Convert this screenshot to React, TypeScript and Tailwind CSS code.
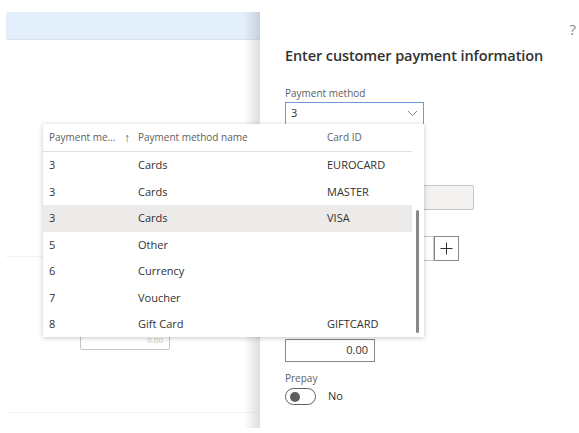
import React from "react";

const rows = [
  { id: "3", name: "Cards", card: "EUROCARD" },
  { id: "3", name: "Cards", card: "MASTER" },
  { id: "3", name: "Cards", card: "VISA", active: true },
  { id: "5", name: "Other", card: "" },
  { id: "6", name: "Currency", card: "" },
  { id: "7", name: "Voucher", card: "" },
  { id: "8", name: "Gift Card", card: "GIFTCARD" },
];

function Chevron() {
  return (
    <svg width="11" height="7" viewBox="0 0 11 7" fill="none">
      <path d="M1 1l4.5 4.5L10 1" stroke="#8a8886" strokeWidth="1" />
    </svg>
  );
}

function Lookup() {
  return (
    <div className="absolute left-[43px] top-[124px] w-[381px] h-[213px] bg-white shadow-[0_1px_5px_rgba(0,0,0,0.22)] text-[11px] text-[#323130]">
      {/* Header */}
      <div className="flex items-center h-[28px] mr-[12px] border-b border-[#e1dfdd] text-[10px] text-[#605e5c]">
        <div className="w-[95px] pl-[6px] flex items-center">
          <span className="flex-1">Payment me...</span>
          <span className="w-[14px] text-[12px] font-light">↑</span>
        </div>
        <div className="w-[189px]">Payment method name</div>
        <div>Card ID</div>
      </div>
      {/* Rows */}
      <div className="relative">
        {rows.map((r, i) => (
          <div
            key={i}
            className={`flex items-center h-[26.5px] mr-[12px] ${r.active ? "bg-[#edebe9]" : ""}`}
          >
            <div className="w-[95px] pl-[6px]">{r.id}</div>
            <div className="w-[189px]">{r.name}</div>
            <div>{r.card}</div>
          </div>
        ))}
        {/* Scrollbar */}
        <div className="absolute right-[5px] top-[58px] w-[3px] h-[123px] rounded-full bg-[#8a8886]" />
      </div>
    </div>
  );
}

export default function App() {
  return (
    <div
      className="relative w-[579px] h-[433px] bg-white overflow-hidden flex"
      style={{ fontFamily: '"Open Sans", "Noto Sans", sans-serif' }}
    >
      {/* Left page behind the panel */}
      <div className="relative w-[260px] h-[428px] shrink-0 pt-[12px] pl-[6px]">
        <div className="h-[28px] bg-[#e3effb] border-b border-[#dbe3ea]" />
        <div className="mt-[216px] h-px bg-[#f3f2f1]" />
        <div className="ml-[74px] mt-[79px] w-[90px] h-[14px] border border-t-0 border-[#c8c6c4] rounded-b-[2px] flex justify-end items-start pr-[6px] text-[8px] leading-[8px] text-[#c8c6c4]">
          0.00
        </div>
        <div className="mt-[62px] h-px bg-[#f6f5f4]" />
        <div className="absolute right-0 top-[12px] bottom-0 w-[16px] bg-gradient-to-r from-transparent to-[rgba(0,0,0,0.13)] pointer-events-none" />
      </div>

      {/* Right panel */}
      <div className="relative flex-1 pl-[25px] pt-[46px] text-[#323130]">
        <div className="absolute right-[3px] top-[22px] text-[15px] text-[#8a8886] leading-none">?</div>
        <div className="text-[14.5px] font-semibold leading-[20px] tracking-[-0.1px]">
          Enter customer payment information
        </div>
        <div className="mt-[20px] text-[10px] text-[#605e5c] leading-[14px]">Payment method</div>
        <div className="mt-[2px] w-[139px] h-[23px] border border-[#6f98d8] flex items-center justify-between pl-[5px] pr-[5px] text-[11px]">
          <span>3</span>
          <Chevron />
        </div>

        {/* Fields hidden by the lookup */}
        <div className="mt-[60px] w-[189px] h-[25px] bg-[#f3f2f1] border border-[#c8c6c4] rounded-[2px]" />
        <div className="mt-[26px] flex">
          <div className="w-[149px] h-[25px] border border-[#c8c6c4]" />
          <div className="w-[25px] h-[25px] border border-[#8a8886] flex items-center justify-center">
            <svg width="13" height="13" viewBox="0 0 13 13">
              <path d="M6.5 0.5v12M0.5 6.5h12" stroke="#323130" strokeWidth="1" />
            </svg>
          </div>
        </div>

        <div className="mt-[78px] w-[90px] h-[23px] border border-[#8a8886] flex items-center justify-end pr-[6px] text-[11px]">
          0.00
        </div>
        <div className="mt-[9px] text-[10px] text-[#605e5c] leading-[14px]">Prepay</div>
        <div className="mt-[3px] flex items-center">
          <div className="w-[31px] h-[17px] rounded-full border border-[#605e5c] flex items-center pl-[4px]">
            <div className="w-[10px] h-[10px] rounded-full bg-[#605e5c]" />
          </div>
          <span className="ml-[12px] text-[11px]">No</span>
        </div>
      </div>

      <Lookup />
    </div>
  );
}
